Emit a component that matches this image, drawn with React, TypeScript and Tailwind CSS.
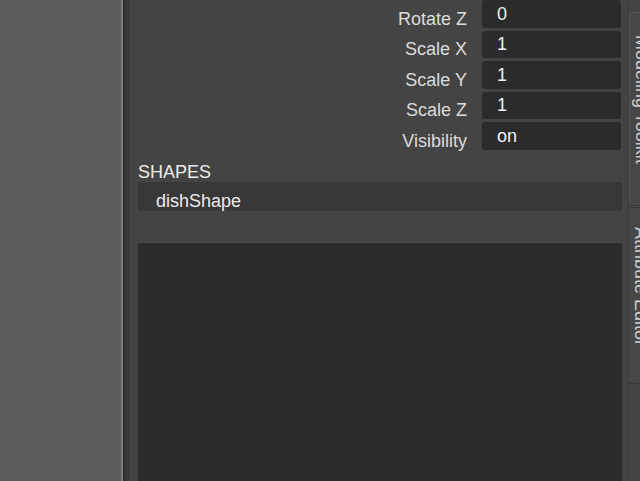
import React from "react";

const rows = [
  { label: "Rotate Z", value: "0" },
  { label: "Scale X", value: "1" },
  { label: "Scale Y", value: "1" },
  { label: "Scale Z", value: "1" },
  { label: "Visibility", value: "on" },
];

export default function App() {
  return (
    <div
      className="flex w-[640px] h-[481px] overflow-hidden bg-[#444444] text-[18px] leading-[18px]"
      style={{ fontFamily: '"Liberation Sans", Arial, sans-serif' }}
    >
      {/* left viewport area */}
      <div className="w-[121px] shrink-0 bg-[#5b5b5b]" />
      {/* splitter */}
      <div className="w-[2px] shrink-0 bg-[#7c7c7c]" />
      <div className="w-[2px] shrink-0 bg-[#2f2f2f]" />
      <div className="w-[5px] shrink-0 bg-[#3a3a3a]" />

      {/* main attribute panel */}
      <div className="flex flex-col w-[498px] shrink-0 bg-[#444444]">
        <div className="flex flex-col">
          {rows.map((r) => (
            <div key={r.label} className="flex h-[30.5px] shrink-0">
              <div className="w-[337px] shrink-0 pt-[9.5px] text-right text-[#dcdcdc]">
                {r.label}
              </div>
              <div className="ml-[15px] w-[139px] h-[27.5px] rounded-[3px] bg-[#2b2b2b] pl-[15px] pt-[4.5px] text-[#f2f2f2]">
                {r.value}
              </div>
            </div>
          ))}
        </div>
        <div className="mt-[10px] pl-[8px] text-[#ececec]">SHAPES</div>
        <div className="ml-[8px] mr-[6px] mt-[1.5px] h-[28.5px] bg-[#383838] pl-[18px] pt-[10px] text-[#ececec]">
          dishShape
        </div>
        <div className="ml-[8px] mr-[6px] mt-[31.5px] flex-1 border-t border-[#4e4e4e] bg-[#2b2b2b]" />
      </div>

      {/* right tab strip */}
      <div className="flex flex-col w-[26px] shrink-0 border-l border-[#3a3a3a] bg-[#444444]">
        <div className="h-[12px] shrink-0" />
        <div className="h-[193px] shrink-0 rounded-tl-[3px] border-t border-l border-[#555555] bg-[#474747] pt-[22px]">
          <div
            className="pl-[1px] text-[#cfcfcf] leading-[22px]"
            style={{ writingMode: "vertical-rl" }}
          >
            Modeling Toolkit
          </div>
        </div>
        <div className="h-[3px] shrink-0 border-t border-b border-[#383838] bg-[#4a4a4a]" />
        <div className="h-[175px] shrink-0 bg-[#474747] pt-[19px]">
          <div
            className="pl-[1px] text-[#cfcfcf] leading-[22px]"
            style={{ writingMode: "vertical-rl" }}
          >
            Attribute Editor
          </div>
        </div>
        <div className="h-[1px] shrink-0 bg-[#363636]" />
        <div className="flex-1 bg-[#444444]" />
      </div>
    </div>
  );
}
